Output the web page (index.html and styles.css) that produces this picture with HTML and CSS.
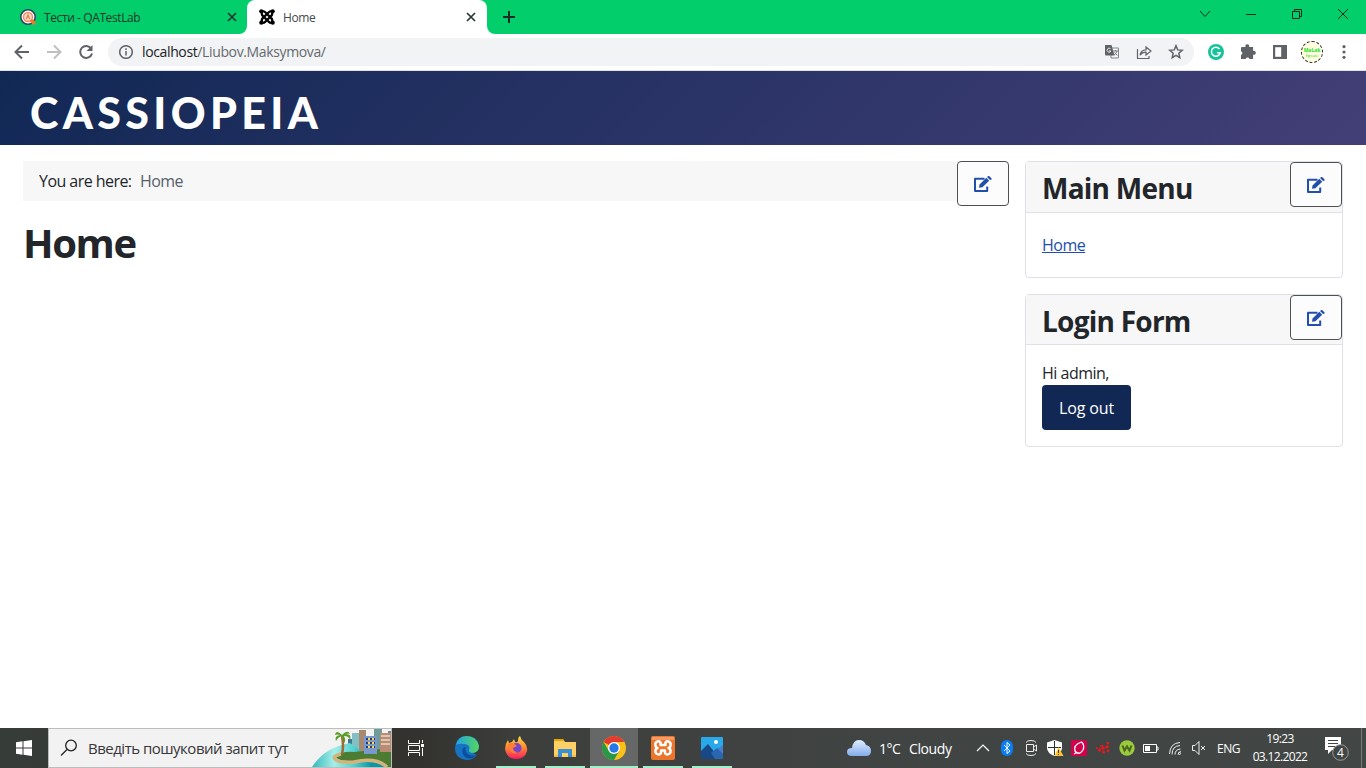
FILE: index.html
```html
<!DOCTYPE html>
<html lang="en">
<head>
<meta charset="utf-8">
<title>Home</title>
<link rel="stylesheet" href="styles.css">
</head>
<body>
<svg class="defs" width="0" height="0">
  <symbol id="edit" viewBox="0 0 18 16"><path fill="none" stroke="currentColor" stroke-width="2" stroke-linejoin="round" d="M10.5 2.8H1V15H13.2V10.5"/><path fill="currentColor" d="M5 11.8 5.5 8.4 12.3 1.8 15.2 4.7 8.4 11.3ZM13 1.1 14 .2Q14.7-.3 15.4.3L17.4 2.3Q18 3 17.5 3.6L16 4.1Z"/></symbol>
</svg>
<div class="tabs">
  <div class="tab">
    <svg class="favicon" viewBox="0 0 16 16"><circle cx="8" cy="8" r="7.2" fill="#fff" stroke="#34435f" stroke-width="1.6"/><circle cx="8" cy="8" r="4.5" fill="#fbd9c9" stroke="#f08a5d" stroke-width="1.4"/><path d="m6.300 10 1.700-4 1.700 4" fill="none" stroke="#e9773f" stroke-width="1.2"/><path d="m12 12 1.800 2" stroke="#f07a2c" stroke-width="3.4" stroke-linecap="round"/></svg>
    <span class="tab-title t-one">Тести - QATestLab</span>
    <svg class="close" viewBox="0 0 10 10"><path d="m1 1 8 8M9 1 1 9"/></svg>
  </div>
  <div class="tab active">
    <svg class="favicon" viewBox="0 0 16 16"><g fill="none" stroke="#000" stroke-width="2.3"><path d="M2.5 2.2Q4.8 1.6 6.3 3.2L13.4 10.4M13.5 2.2Q11.2 1.6 9.7 3.2L2.6 10.4M2.5 13.8Q4.8 14.4 6.3 12.8L13.4 5.6M13.5 13.8Q11.2 14.4 9.7 12.8L2.6 5.6M3 3Q2.2 5 3.5 6.5M13 3Q13.8 5 12.5 6.5M3 13Q2.2 11 3.5 9.5M13 13Q13.8 11 12.5 9.5"/></g><circle cx="2.3" cy="2.3" r="2.1"/><circle cx="13.7" cy="2.3" r="2.1"/><circle cx="2.3" cy="13.7" r="2.1"/><circle cx="13.7" cy="13.7" r="2.1"/></svg>
    <span class="tab-title t-two">Home</span>
    <svg class="close" viewBox="0 0 10 10"><path d="m1 1 8 8M9 1 1 9"/></svg>
  </div>
  <svg class="plus" viewBox="0 0 12 12"><path d="M6 0v12M0 6h12" stroke="#1d2b24" stroke-width="2"/></svg>
  <div class="window-buttons">
    <svg viewBox="0 0 12 12"><path d="m1 3 5 5.5L11 3"/></svg>
    <svg viewBox="0 0 12 12"><path d="M1 6.5h10"/></svg>
    <svg viewBox="0 0 12 12"><path d="M1.5 3.5h7v7h-7zM3.5 3.500v-2h7v7h-2"/></svg>
    <svg viewBox="0 0 12 12"><path d="m1 1 10 10M11 1 1 11"/></svg>
  </div>
</div>
<div class="toolbar">
  <div class="nav">
    <svg viewBox="0 0 16 16"><path d="M15 8H2M8 1.500 1.500 8 8 14.500"/></svg>
    <svg class="dim" viewBox="0 0 16 16"><path d="M1 8h13M8 1.500 14.500 8 8 14.500"/></svg>
    <svg viewBox="0 0 16 16"><path d="M13.200 4.600A6 6 0 1 0 14 9.500"/><path d="M14.500 1v6h-6z" class="solid"/></svg>
  </div>
  <div class="omnibox">
    <svg class="info" viewBox="0 0 14 14"><circle cx="7" cy="7" r="6.300"/><path d="M7 6v4.500M7 3.300v1.600"/></svg>
    <span class="url"><b>localhost</b>/Liubov.Maksymova/</span>
    <div class="omni-icons">
      <svg viewBox="0 0 16 16"><path d="M7 4h7.500v10H7z" fill="#f4f4f4" stroke="#85898d"/><path d="M1 1h6.500l3 10.500H2Q1 11.500 1 10.500z" fill="#5f6368"/><path d="M6.500 4.700A2 2 0 1 0 7 7H5" fill="none" stroke="#e8eaed"/><path d="M9 7h5M11.500 6v1M13 7q-1 3-3 4M10.500 8.500l3 3" stroke="#777b80" fill="none"/></svg>
      <svg viewBox="0 0 16 16" class="outline"><path d="M1.500 5v9.500H13V12M4 11Q5 6 10 5.800V3l5 4-5 4V8.200Q6.500 8 4 11Z"/></svg>
      <svg viewBox="0 0 16 16" class="outline star"><path d="m8 1.800 1.700 4.100 4.500.400-3.400 2.900 1 4.500L8 11.300l-3.800 2.400 1-4.500-3.400-2.900 4.500-.400z"/></svg>
    </div>
  </div>
  <div class="extensions">
    <svg viewBox="0 0 16 16"><circle cx="8" cy="8" r="8" fill="#15c39a"/><path d="M11.500 5A4.500 4.500 0 1 0 12.300 8.700H9" fill="none" stroke="#fff" stroke-width="1.500"/></svg>
    <svg viewBox="0 0 16 16"><path fill="#5f6368" d="M2 3h3.500a2 2 0 1 1 3.600 0h4v4a2 2 0 1 1 0 3.700V15H9.500a2 2 0 0 0-3.800 0H1v-4a2 2 0 0 0 0-3.800V4Q1 3 2 3Z"/></svg>
    <svg viewBox="0 0 16 16"><path d="M1 1h14v14H1z" fill="#5f6368"/><path d="M3.200 3.200h6v9.600h-6z" fill="#fff"/></svg>
    <div class="avatar"><span>MaLak</span><small>figcute</small></div>
    <svg viewBox="0 0 16 16" fill="#5f6368"><circle cx="8" cy="2.700" r="1.600"/><circle cx="8" cy="8" r="1.600"/><circle cx="8" cy="13.300" r="1.600"/></svg>
  </div>
</div>
<header class="site-header"><span>CASSIOPEIA</span></header>
<main>
  <section class="content">
    <div class="crumbs"><span class="here">You are here:</span><span class="current">Home</span><a class="edit"><svg><use href="#edit"/></svg></a></div>
    <h1><span>Home</span></h1>
  </section>
  <aside>
    <div class="card">
      <div class="card-head"><h3>Main Menu</h3><a class="edit"><svg><use href="#edit"/></svg></a></div>
      <div class="card-body menu"><a>Home</a></div>
    </div>
    <div class="card">
      <div class="card-head login-head"><h3>Login Form</h3><a class="edit"><svg><use href="#edit"/></svg></a></div>
      <div class="card-body login"><span>Hi admin,</span><button>Log out</button></div>
    </div>
  </aside>
</main>
<footer class="taskbar">
  <div class="start"><svg viewBox="0 0 16 16"><path fill="#fff" d="M0 2.200 6.500 1.300v6.200H0zM7.500 1.200 16 0v7.500H7.500zM0 8.500h6.500v6.200L0 13.800zM7.500 8.500H16V16l-8.500-1.200z"/></svg></div>
  <div class="search">
    <svg class="magnifier" viewBox="0 0 18 18"><circle cx="11" cy="6.500" r="5.300"/><path d="M7 10.500 1 16.500"/></svg>
    <span>Введіть пошуковий запит тут</span>
    <svg class="scene" viewBox="0 0 79 38">
      <defs><linearGradient id="sea"><stop stop-color="#35b9bd"/><stop offset=".3" stop-color="#a5eee8"/><stop offset=".55" stop-color="#58d3d1"/><stop offset=".8" stop-color="#0d97a5"/></linearGradient></defs>
      <path fill="#3e7590" d="M36 10h6v16h-6z"/><path fill="#84bfc4" d="M40 4h8v22h-8z"/><path fill="#a78970" d="M47 1h7v24h-7z"/><path fill="#6f9c96" d="M62 0h8v24h-8z"/><path fill="#7186a4" d="M76 2h3v20h-3z"/>
      <path d="M0 38Q13 18 38 14L60 30 74 38z" fill="url(#sea)"/>
      <path d="M24 28Q28 22 42 23L79 19V38H75Q66 27 40 32Q26 32 24 28Z" fill="#4c7c31"/>
      <path d="M29 25Q20 27 23 30 26 34 42 33 64 28 75 38" fill="none" stroke="#d5b37c" stroke-width="3.500"/>
      <path fill="#7998cc" d="M52 7h13v18H52z"/><path fill="#b78c72" d="M68 4h11v19H68z"/>
      <path stroke="#2b3a73" stroke-width="2" stroke-dasharray="2 2" d="M54 10h9M54 14h9M54 18h9"/><path stroke="#ffd84c" stroke-width="2" stroke-dasharray="2 2" d="M56 10h7M56 14h7M56 18h7"/><path stroke="#ead7c7" stroke-width="1.500" d="M69 7h9M69 11h9M69 15h9"/>
      <path d="M30 7q2 10 0 18" stroke="#a16832" stroke-width="2.500" fill="none"/><path d="M30 6Q24 0 23 6q2-1 5 0-6 1-4 6 2-4 6-5 0 4 3 7 1-4-1-7 5 0 6 4 2-6-4-6 3-1 4 0-2-5-8 1z" fill="#599d28"/>
    </svg>
  </div>
  <div class="task-view"><svg viewBox="0 0 17 16"><path d="M.5 0v3.500h11V0M.5 16v-3.500h11V16M.5 5.500h11v5H.5zM14.500 0v3M14.500 8v8" fill="none" stroke="#fff"/><path d="M13 4h3v3h-3z" fill="#fff"/></svg></div>
  <div class="apps">
    <div class="app"><svg viewBox="0 0 24 24"><defs><linearGradient id="edgeg"><stop stop-color="#22a4e4"/><stop offset="1" stop-color="#54d65d"/></linearGradient></defs><path d="M0 12Q1 0 12 0t12 10q0 6-6 7-4 0-4-2l8 4Q18 24 12 24 0 23 0 12Z" fill="#1672c3"/><path d="M1 9Q3 0 12 0t12 10q0 7-7 7-4-1-3-3 2-5-4-6-6-1-9 1z" fill="url(#edgeg)"/><path d="M8 12q-2 5 2 9 5 4 12-2-5 2-9-1-4-3-2-7-2 0-3 1z" fill="#0b4f9d"/></svg></div>
    <div class="app open"><svg viewBox="0 0 24 24"><defs><linearGradient id="fox" x2="0" y2="1"><stop stop-color="#ffe044"/><stop offset=".5" stop-color="#ff892e"/><stop offset="1" stop-color="#f61c67"/></linearGradient></defs><path d="M1 13Q1 8 4 4l1 3 3-1 2-3 1 3q2 1 3-1 0-4 2-5 1 4 4 6 4 4 3 9-2 8-11 8T1 13z" fill="url(#fox)"/><circle cx="12.500" cy="12" r="5" fill="#7446cc"/><path d="M4 8q5-3 9 2l-4 2q0 4 5 4-6 3-9-2z" fill="#ff7c35"/></svg></div>
    <div class="app open"><svg viewBox="0 0 24 24"><path d="M1 3h9l2 3h11v15H1z" fill="#ffd063"/><path d="M1 3h9l1 2H1z" fill="#e6a800"/><path d="M5 13h14v8h-4v-4H9v4H5z" fill="#388fd2"/><path d="M1 20h4M19 20h4" stroke="#d9a943"/></svg></div>
    <div class="app open active-app"><svg viewBox="0 0 24 24"><circle cx="12" cy="12" r="12" fill="#fbc116"/><path d="M12 12 1.600 6A12 12 0 0 1 22.400 6H12z" fill="#e33b2e"/><path d="M1.600 6A12 12 0 0 0 12 24l5.200-9L12 12l-5.200 3z" fill="#279847"/><circle cx="12" cy="12" r="6" fill="#fff"/><circle cx="12" cy="12" r="4.700" fill="#2677e8"/></svg></div>
    <div class="app open"><svg viewBox="0 0 24 24"><rect width="24" height="24" rx="2" fill="#ed752b"/><path d="M1 1h22v3H1z" fill="#f79b66"/><path d="M9.500 6.300a3 3 0 0 0-5 3q0 2 2 2.700-2 .700-2 3a3 3 0 0 0 5.500 2v-2.500h4V17a3 3 0 0 0 5.500-2q0-2.300-2-3 2-.700 2-2.700a3 3 0 0 0-5-3V9h-5z" fill="none" stroke="#fff" stroke-width="2.500" stroke-linejoin="round"/></svg></div>
    <div class="app open"><svg viewBox="0 0 24 24"><rect x="1" y="1" width="22" height="22" rx="1" fill="#29a9ea"/><path d="m16 14 7-5v14h-7z" fill="#4c7dcc"/><path d="M1 15 8 8 20 23H1z" fill="#164985"/><path d="m11 17 6-5 6 6v5H15z" fill="#2866b2"/><circle cx="16" cy="6" r="2" fill="#fff"/></svg></div>
  </div>
  <div class="weather"><svg viewBox="0 0 24 16"><defs><linearGradient id="cloud" x2="0" y2="1"><stop stop-color="#e1edff"/><stop offset="1" stop-color="#82acea"/></linearGradient></defs><path d="M5 16Q0 16 0 12t5-4Q6 0 12 0q5 0 7 5 5 1 5 6t-5 5z" fill="url(#cloud)"/></svg><span class="temp">1°C</span><span class="sky">Cloudy</span></div>
  <div class="tray">
    <svg viewBox="0 0 16 16"><path d="m2 11 6-6 6 6" fill="none" stroke="#fff" stroke-width="1.200"/></svg>
    <svg viewBox="0 0 16 16"><rect x="2" width="12" height="16" rx="6" fill="#087ef5"/><path d="m5 5 6 6-3 2.500v-11L11 5l-6 6" fill="none" stroke="#fff"/></svg>
    <svg viewBox="0 0 16 16" class="line"><path d="M3.500 4.500h7v7h-7zM10.500 7l3-2v6l-3-2M3 2.500Q4 .5 8 .5t5 2M3 13.500q1 2 5 2t5-2"/></svg>
    <svg viewBox="0 0 16 16"><path d="M7.500 0 15 2.500V8q0 5-7.500 8Q0 13 0 8V2.500z" fill="#fff"/><path d="M7.500 1v14M1 7.500h13" stroke="#292e2c"/><path d="m11.500 7 5 9h-9z" fill="#ffc432"/><path d="M11.500 10v3M11.500 14v1" stroke="#433100"/></svg>
    <svg viewBox="0 0 16 16"><rect width="16" height="16" rx="1" fill="#d3004c"/><path d="M10.500 2Q2 5 4 11q4 5 8-1 2-5-1.500-8ZM3 14Q5 13 6 12" stroke="#fff" stroke-width="1.300" fill="none"/></svg>
    <svg viewBox="0 0 16 16" fill="#ed171b"><circle cx="8" cy="8" r="1.800"/><circle cx="12" cy="7" r="1.700"/><circle cx="4.500" cy="10" r="1.700"/><circle cx="8.500" cy="12" r="1.500"/><circle cx="13" cy="11" r="1.300"/><circle cx="2" cy="8" r="1"/><path d="M5 5h3v1.500H5zm6-3h3v2.500h-1.500z"/></svg>
    <svg viewBox="0 0 16 16"><circle cx="8" cy="8" r="7.700" fill="#9acb3c"/><path d="m3.500 5.500 2 5 2.500-4 2.500 4 2-5" fill="none" stroke="#4a6420" stroke-width="2"/></svg>
    <svg viewBox="0 0 16 16"><path d="M.5 4.500h13v8H.5zM13.500 7h1.500v3h-1.500" fill="none" stroke="#fff"/><path d="M2 6h5v5H2z" fill="#fff"/></svg>
    <svg viewBox="0 0 16 16" class="line"><path d="M2.500 14Q3 3 13 2.500M5 14.500Q5 6 13 5.500M8 14.500q0-5 5.500-5.500M11 14.500q0-2.500 3-3"/><circle cx="12.500" cy="13.500" r="1"/></svg>
    <svg viewBox="0 0 16 16" class="line"><path d="M1.500 5.500H4l4-4v13l-4-4H1.500zM10 6l4 4M14 6l-4 4"/></svg>
  </div>
  <span class="lang">ENG</span>
  <div class="clock"><span>19:23</span><span class="date">03.12.2022</span></div>
  <div class="notify"><svg viewBox="0 0 24 24"><path d="M0 0h16v13H7l-4 4v-4H0z" fill="#fff"/><path d="M3 3.500h10M3 6.500h10M3 9.500h7" stroke="#414544"/><circle cx="15.500" cy="15.500" r="7.800" fill="#414544" stroke="#989b9a"/><text x="15.500" y="20" text-anchor="middle">4</text></svg></div>
  <div class="desktop-edge"></div>
</footer>
</body>
</html>
```
FILE: styles.css
```css
* { box-sizing: border-box; }
body { margin: 0; height: 768px; display: flex; flex-direction: column; overflow: hidden; background: #fff; font-family: "Open Sans", "Noto Sans", sans-serif; color: #22262a; }
svg { display: block; flex: none; }
.defs { position: absolute; }
.tabs { height: 34px; flex: none; display: flex; align-items: center; background: linear-gradient(#02cf6b, #02cf6b) left 495px top / 871px 34px no-repeat, linear-gradient(#02cf6b 0 17px, #fff 17px) 0 0 / 495px 34px no-repeat; }
.tab { height: 34px; width: 247px; padding: 0 10px 0 20px; display: flex; align-items: center; background: #02cf6b; border-radius: 0 0 8px 0; font-size: 12px; }
.tab.active { width: 240px; padding: 0 11px 0 12px; background: #fff; border-radius: 8px 8px 0 0; }
.favicon { width: 16px; height: 16px; }
.tab-title { flex: 1; margin-left: 8px; white-space: nowrap; color: #1d3528; }
.active .tab-title { color: #45494d; }
.t-one { letter-spacing: -.4px; }
.t-two { letter-spacing: -.4px; }
.close { width: 10px; height: 10px; fill: none; stroke: #25382e; stroke-width: 1.7; }
.plus { width: 28px; height: 34px; padding: 11px 0 11px 16px; background: #02cf6b; border-radius: 0 0 0 8px; }
.window-buttons { margin-left: auto; display: flex; gap: 34px; padding: 0 17px 6px 0; }
.window-buttons svg { width: 12px; height: 12px; fill: none; stroke: #10281b; }
.toolbar { height: 37px; flex: none; display: flex; align-items: center; border-bottom: 1px solid #dfe1e3; background: #fff; }
.nav { width: 108px; display: flex; gap: 16px; padding-left: 14px; }
.nav svg { width: 16px; height: 16px; fill: none; stroke: #5f6368; stroke-width: 2; }
.nav .dim { stroke: #bdbfc1; }
.nav .solid { fill: #5f6368; stroke: none; }
.omnibox { width: 1086px; height: 28px; display: flex; align-items: center; border-radius: 14px; background: #f1f3f4; padding: 0 10px 0 11px; }
.info { width: 14px; height: 14px; fill: none; stroke: #5f6368; stroke-width: 1.5; }
.url { margin-left: 9px; padding-bottom: 1px; font-size: 14px; letter-spacing: -.37px; color: #666a6e; white-space: nowrap; }
.url b { font-weight: 400; color: #202124; }
.omni-icons { margin-left: auto; display: flex; gap: 16px; }
.omni-icons svg { width: 16px; height: 16px; }
.outline { fill: none; stroke: #5f6368; stroke-width: 1.2; }
.star { stroke-width: 1.5; }
.extensions { display: flex; align-items: center; padding-left: 14px; gap: 16px; }
.extensions svg { width: 16px; height: 16px; }
.avatar { width: 22px; height: 22px; border: 1px dashed #292e35; border-radius: 50%; background: #fffedf; display: flex; flex-direction: column; align-items: center; justify-content: center; margin: 0 -3px; color: #12de22; overflow: hidden; }
.avatar span { font: 700 5px/6px "Open Sans", sans-serif; }
.avatar small { font: 4px/5px "Open Sans", sans-serif; }
.site-header { height: 74px; flex: none; padding: 0 0 0 30px; background: linear-gradient(135deg, #112855 0%, #433f76 100%); color: #fff; font: 900 43px/83px Lato, sans-serif; letter-spacing: 4.35px; }
main { flex: 1; display: flex; gap: 16px; padding: 16px 23px 0; align-items: flex-start; }
.content { width: 986px; }
.crumbs { height: 40px; display: flex; align-items: flex-start; padding-left: 16px; background: #f7f7f7; font-size: 16px; line-height: 41px; white-space: nowrap; }
.here { width: 101px; letter-spacing: -.55px; }
.current { letter-spacing: -.6px; color: #56606b; }
.edit { width: 52px; height: 45px; margin-left: auto; border: 1px solid #4c5055; border-radius: 4px; background: #fcfcfc; color: #224faa; display: flex; align-items: center; justify-content: center; flex: none; }
.edit svg { width: 18px; height: 16px; overflow: visible; }
h1, h3 { margin: 0; font-weight: 700; white-space: nowrap; }
h1 { margin-top: 18px; font-size: 40px; line-height: 48px; letter-spacing: -1.4px; }
aside { width: 318px; display: flex; flex-direction: column; gap: 16px; }
.card { border: 1px solid #dfe1e8; border-radius: 4px; }
.card-head { height: 51px; display: flex; align-items: flex-start; padding-left: 16px; background: #f7f7f7; border-bottom: 1px solid #dfe1e8; }
.login-head { height: 50px; }
h3 { font-size: 28px; line-height: 52px; letter-spacing: -.75px; }
.card-body { font-size: 16px; line-height: 24px; letter-spacing: -.5px; padding: 16px; }
.menu { height: 64px; padding-top: 20px; }
.menu a { color: #224faa; text-decoration: underline; }
.login { height: 101px; display: flex; flex-direction: column; align-items: flex-start; }
button { width: 89px; height: 45px; padding: 1px 0 0; border: 0; border-radius: 4px; background: #112855; color: #fff; font: 16px "Open Sans", sans-serif; letter-spacing: -.15px; }
.taskbar { height: 40px; flex: none; display: flex; align-items: center; background: linear-gradient(90deg, #363c38 0, #33322e 420px, #3d3f3c 520px, #404443 900px, #424645 1366px); color: #fff; white-space: nowrap; }
.start { width: 48px; padding-left: 16px; }
.start svg { width: 16px; height: 16px; }
.search { width: 344px; height: 40px; flex: none; display: flex; align-items: center; border: 1px solid #bdbdbd; background: #f2f2f2; color: #373737; font-size: 15px; letter-spacing: -.5px; padding-left: 11px; }
.magnifier { width: 18px; height: 18px; margin-right: 10px; fill: none; stroke: #222; stroke-width: 1.3; }
.scene { width: 79px; height: 38px; margin-left: auto; }
.task-view { width: 51px; padding-left: 16px; }
.task-view svg { width: 17px; height: 16px; }
.apps { display: flex; gap: 1px; }
.app { width: 48px; height: 40px; padding-top: 8px; display: flex; flex-direction: column; align-items: center; justify-content: space-between; }
.app svg { width: 24px; height: 24px; }
.open::after { content: ""; width: 40px; height: 2px; background: #a3efca; }
.active-app { background: #656867; }
.active-app::after { width: 48px; }
.weather { width: 235px; padding-left: 111px; display: flex; align-items: center; font-size: 14px; }
.weather svg { width: 24px; height: 16px; margin-right: 8px; }
.temp { width: 30px; letter-spacing: -.5px; }
.sky { letter-spacing: -.4px; }
.tray { width: 240px; display: flex; }
.tray svg { width: 24px; height: 16px; padding: 0 4px; overflow: visible; }
.line { fill: none; stroke: #eee; }
.lang { width: 35px; padding-left: 6px; font-size: 12px; letter-spacing: -.5px; }
.clock { width: 68px; display: flex; flex-direction: column; align-items: center; gap: 2px; font-size: 12px; line-height: 16px; letter-spacing: -.65px; }
.notify { width: 47px; padding: 2px 0 0 11px; }
.notify svg { width: 24px; height: 24px; }
.notify text { font: 12px "Open Sans", sans-serif; fill: #fff; }
.desktop-edge { width: 1px; height: 40px; background: #777b79; }
```
